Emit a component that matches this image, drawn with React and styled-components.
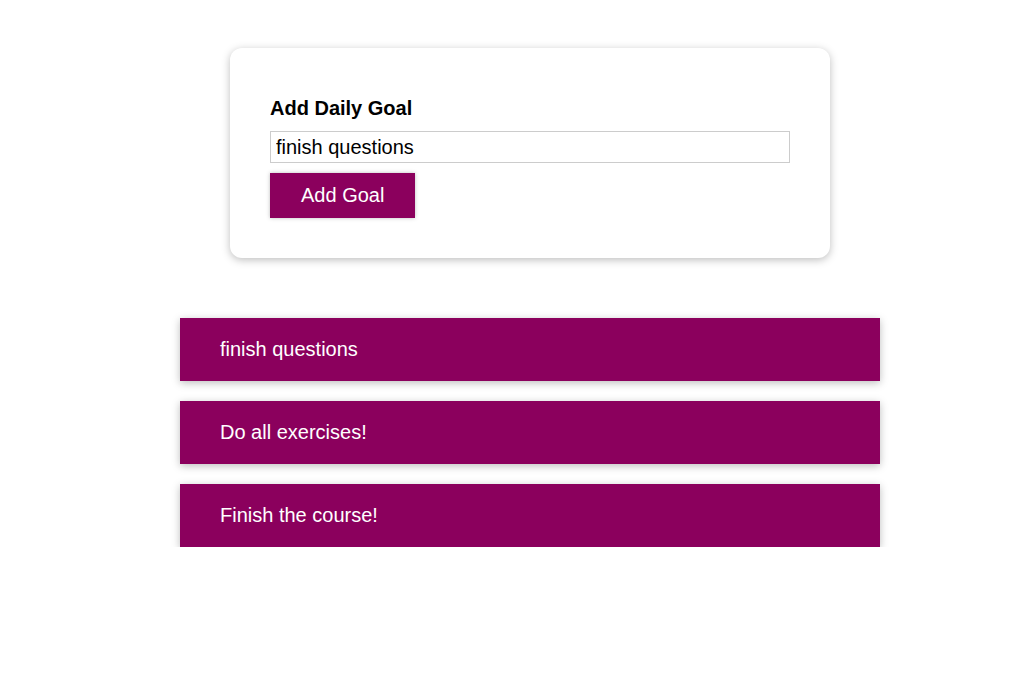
import React, { useState } from "react";
import styled, { createGlobalStyle } from "styled-components";

const GlobalStyle = createGlobalStyle`
  * { box-sizing: border-box; }
  body {
    margin: 0;
    background: #ffffff;
    font-family: "Liberation Sans", Arial, Helvetica, sans-serif;
    font-size: 20px;
  }
`;

function App() {
  const [text, setText] = useState("finish questions");
  const [goals, setGoals] = useState([
    { id: "g3", text: "finish questions" },
    { id: "g2", text: "Do all exercises!" },
    { id: "g1", text: "Finish the course!" },
  ]);

  const addGoal = (e) => {
    e.preventDefault();
    if (!text.trim()) return;
    setGoals((prev) => [{ id: Math.random().toString(), text }, ...prev]);
  };

  const removeGoal = (id) => {
    setGoals((prev) => prev.filter((g) => g.id !== id));
  };

  return (
    <>
      <GlobalStyle />
      <Page>
        <InputCard>
          <form onSubmit={addGoal}>
            <FormControl>
              <Label>Add Daily Goal</Label>
              <Input
                type="text"
                value={text}
                onChange={(e) => setText(e.target.value)}
              />
            </FormControl>
            <Button type="submit">Add Goal</Button>
          </form>
        </InputCard>
        <GoalList>
          {goals.map((goal) => (
            <GoalItem key={goal.id} onClick={() => removeGoal(goal.id)}>
              {goal.text}
            </GoalItem>
          ))}
        </GoalList>
      </Page>
    </>
  );
}
export default App;

const Page = styled.main`
  display: flex;
  flex-direction: column;
  align-items: center;
  padding: 48px 0 0 36px;
`;

const InputCard = styled.section`
  width: 600px;
  max-width: 90%;
  padding: 40px;
  background: white;
  border-radius: 12px;
  box-shadow: 0 2px 8px rgba(0, 0, 0, 0.26);
`;

const FormControl = styled.div`
  margin: 9px 0 10px;
`;

const Label = styled.label`
  display: block;
  font-weight: bold;
  margin-bottom: 11px;
`;

const Input = styled.input`
  display: block;
  width: 100%;
  border: 1px solid #ccc;
  font: inherit;
  color: #000;
  line-height: 30px;
  padding: 0 5px;
  outline: none;
`;

const Button = styled.button`
  font: inherit;
  padding: 10px 30px;
  border: 1px solid #8b005d;
  color: white;
  background: #8b005d;
  box-shadow: 0 0 4px rgba(0, 0, 0, 0.26);
  cursor: pointer;
`;

const GoalList = styled.ul`
  list-style: none;
  margin: 60px 0 0;
  padding: 0;
  width: 700px;
  max-width: 90%;
  display: flex;
  flex-direction: column;
  gap: 20px;
`;

const GoalItem = styled.li`
  background: #8b005d;
  color: white;
  padding: 20px 40px;
  box-shadow: 0 2px 8px rgba(0, 0, 0, 0.26);
  cursor: pointer;
`;
